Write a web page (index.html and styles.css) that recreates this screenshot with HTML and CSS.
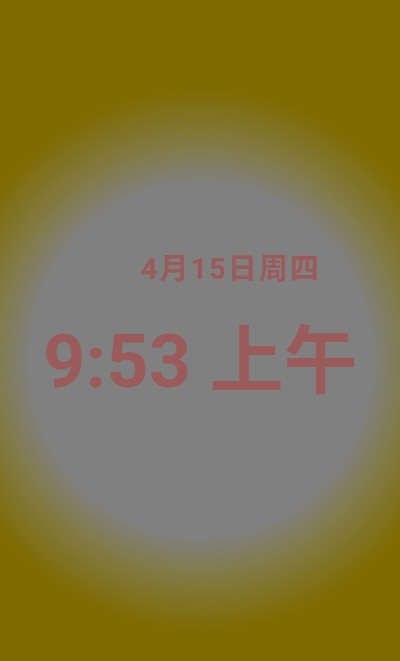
FILE: index.html
```html
<!DOCTYPE html>
<html lang="zh">
<head>
<meta charset="utf-8">
<link rel="stylesheet" href="styles.css">
</head>
<body>
<main class="screen">
  <div class="clock">
    <div class="date">4月15日周四</div>
    <div class="time">9:53 上午</div>
  </div>
</main>
</body>
</html>
```
FILE: styles.css
```css
html, body {
  margin: 0;
  padding: 0;
}
.screen {
  width: 400px;
  height: 661px;
  overflow: hidden;
  background: radial-gradient(ellipse 262px 272px at 201px 360px, #808080 0%, #808080 65%, #827b4a 78%, #7f6b00 100%);
  font-family: Roboto, "Noto Sans CJK SC", sans-serif;
  font-weight: bold;
  color: #9b5b5b;
}
.clock {
  display: flex;
  flex-direction: column;
  padding-top: 255px;
}
.date {
  font-size: 29px;
  line-height: 1;
  letter-spacing: 2px;
  padding-left: 141px;
  white-space: nowrap;
}
.time {
  font-size: 74px;
  line-height: 1;
  padding-left: 43px;
  margin-top: 41px;
  white-space: nowrap;
}
```
